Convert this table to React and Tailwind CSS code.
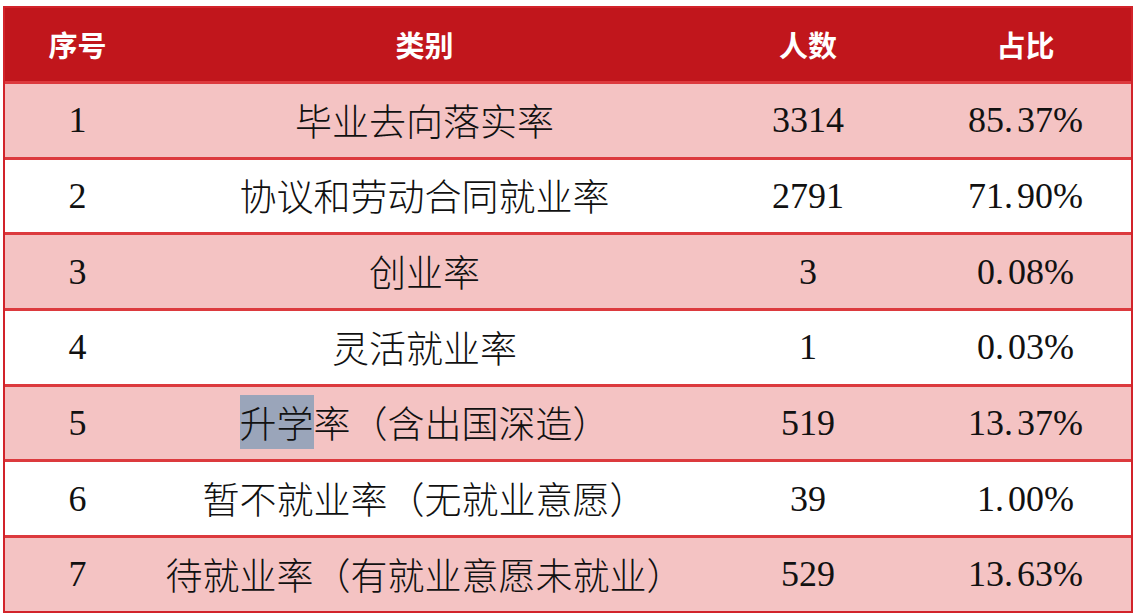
import React from 'react';

const rows = [
  { no: '1', name: '毕业去向落实率', count: '3314', pct: '85.37%' },
  { no: '2', name: '协议和劳动合同就业率', count: '2791', pct: '71.90%' },
  { no: '3', name: '创业率', count: '3', pct: '0.08%' },
  { no: '4', name: '灵活就业率', count: '1', pct: '0.03%' },
  { no: '5', name: '升学率（含出国深造）', count: '519', pct: '13.37%', mark: 2 },
  { no: '6', name: '暂不就业率（无就业意愿）', count: '39', pct: '1.00%' },
  { no: '7', name: '待就业率（有就业意愿未就业）', count: '529', pct: '13.63%' },
];

const cols = 'grid grid-cols-[145px_549px_218px_217px]';
const serif = { fontFamily: '"Liberation Serif", "Noto Sans CJK SC", serif' };

function Pct({ value }) {
  const [a, b] = value.split('.');
  return (
    <span>
      {a}.<span className="ml-[4px]">{b}</span>
    </span>
  );
}

export default function App() {
  return (
    <div className="w-[1136px] h-[616px] bg-white pt-[6px] pl-[3px]">
      <div className="w-[1130px] border-2 border-[#d2232a]">
        <div className={`${cols} h-[73px] bg-[#c1161c] items-center text-white text-[29px] font-bold font-['Noto_Sans_CJK_SC',sans-serif]`}>
          <div className="text-center">序号</div>
          <div className="text-center">类别</div>
          <div className="text-center">人数</div>
          <div className="text-center">占比</div>
        </div>
        {rows.map((r, i) => (
          <div
            key={r.no}
            className={`${cols} h-[75.7px] items-center border-t-[3px] border-[#dc3a3e] text-[36px] text-[#111111] ${
              i % 2 === 0 ? 'bg-[#f4c3c3]' : 'bg-white'
            }`}
          >
            <div className="text-center" style={serif}>{r.no}</div>
            <div className="text-center text-[37px] font-light font-['Noto_Sans_CJK_SC',sans-serif]">
              {r.mark ? (
                <>
                  <span className="bg-[#9aa5ba]">{r.name.slice(0, r.mark)}</span>
                  {r.name.slice(r.mark)}
                </>
              ) : (
                r.name
              )}
            </div>
            <div className="text-center" style={serif}>{r.count}</div>
            <div className="text-center" style={serif}>
              <Pct value={r.pct} />
            </div>
          </div>
        ))}
      </div>
    </div>
  );
}
